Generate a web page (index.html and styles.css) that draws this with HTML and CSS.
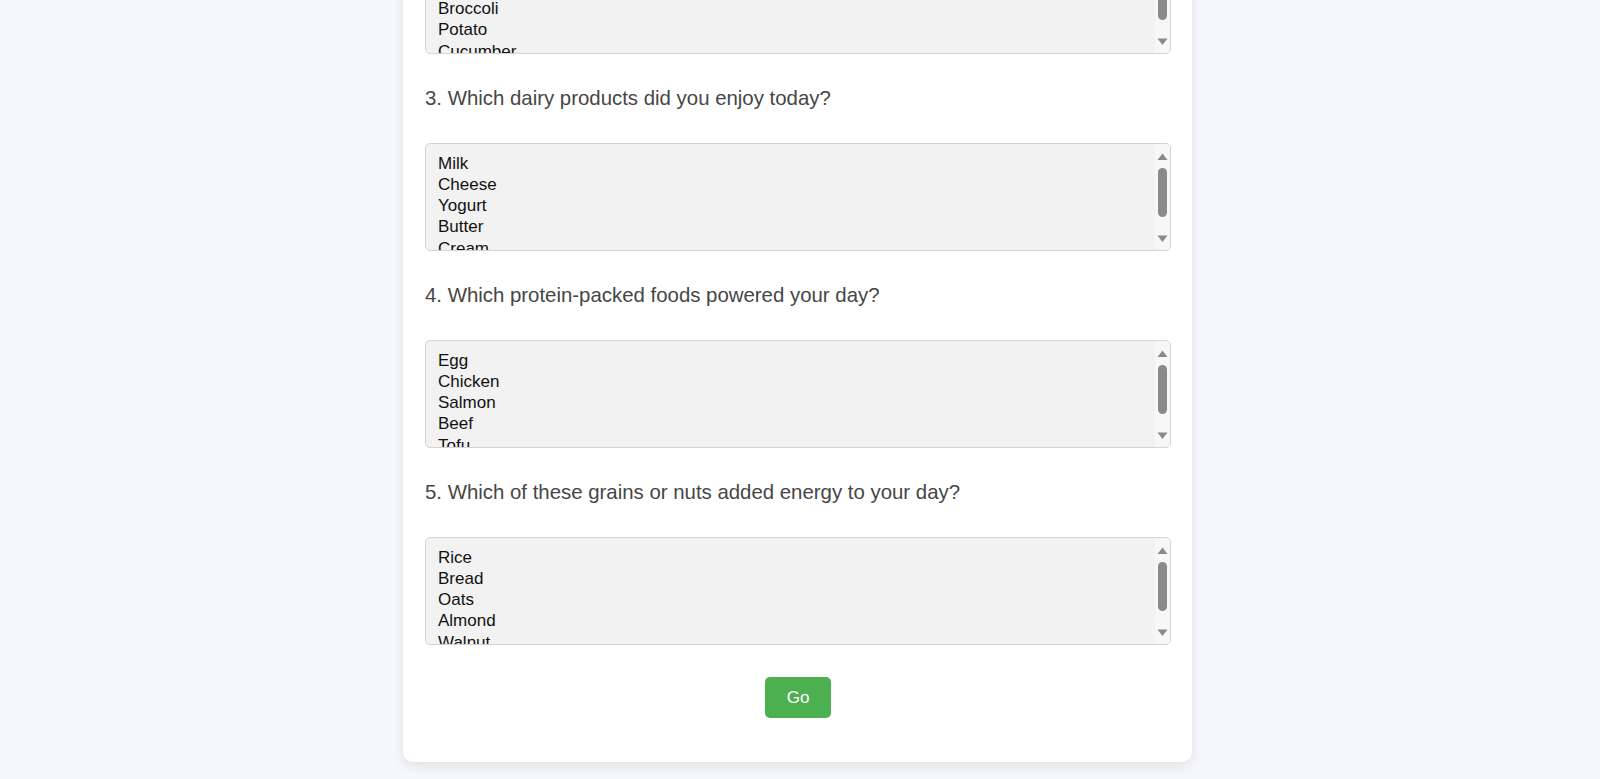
FILE: index.html
```html
<!DOCTYPE html>
<html lang="en">
<head>
<meta charset="utf-8">
<title>Food Survey</title>
<link rel="stylesheet" href="styles.css">
</head>
<body>
<main class="page">
  <form class="card">
    <div class="question">
      <label class="q-label">2. Which vegetables did you eat today?</label>
      <div class="listbox" role="listbox">
        <div class="opts">
          <div class="opt">Carrot</div>
          <div class="opt">Spinach</div>
          <div class="opt">Broccoli</div>
          <div class="opt">Potato</div>
          <div class="opt">Cucumber</div>
          <div class="opt">Tomato</div>
        </div>
        <svg class="sb" width="15" height="106" viewBox="0 0 15 106"><polygon points="2.5,16 7.5,9.5 12.5,16" fill="#8a8a8a"/><rect x="3" y="24" width="9" height="49" rx="4.5" fill="#8a8a8a"/><polygon points="2.5,91.5 12.5,91.5 7.5,98" fill="#8a8a8a"/></svg>
      </div>
    </div>
    <div class="question">
      <label class="q-label">3. Which dairy products did you enjoy today?</label>
      <div class="listbox" role="listbox">
        <div class="opts">
          <div class="opt">Milk</div>
          <div class="opt">Cheese</div>
          <div class="opt">Yogurt</div>
          <div class="opt">Butter</div>
          <div class="opt">Cream</div>
          <div class="opt">Ice Cream</div>
        </div>
        <svg class="sb" width="15" height="106" viewBox="0 0 15 106"><polygon points="2.5,16 7.5,9.5 12.5,16" fill="#8a8a8a"/><rect x="3" y="24" width="9" height="49" rx="4.5" fill="#8a8a8a"/><polygon points="2.5,91.5 12.5,91.5 7.5,98" fill="#8a8a8a"/></svg>
      </div>
    </div>
    <div class="question">
      <label class="q-label">4. Which protein-packed foods powered your day?</label>
      <div class="listbox" role="listbox">
        <div class="opts">
          <div class="opt">Egg</div>
          <div class="opt">Chicken</div>
          <div class="opt">Salmon</div>
          <div class="opt">Beef</div>
          <div class="opt">Tofu</div>
          <div class="opt">Lentils</div>
        </div>
        <svg class="sb" width="15" height="106" viewBox="0 0 15 106"><polygon points="2.5,16 7.5,9.5 12.5,16" fill="#8a8a8a"/><rect x="3" y="24" width="9" height="49" rx="4.5" fill="#8a8a8a"/><polygon points="2.5,91.5 12.5,91.5 7.5,98" fill="#8a8a8a"/></svg>
      </div>
    </div>
    <div class="question">
      <label class="q-label">5. Which of these grains or nuts added energy to your day?</label>
      <div class="listbox" role="listbox">
        <div class="opts">
          <div class="opt">Rice</div>
          <div class="opt">Bread</div>
          <div class="opt">Oats</div>
          <div class="opt">Almond</div>
          <div class="opt">Walnut</div>
          <div class="opt">Quinoa</div>
        </div>
        <svg class="sb" width="15" height="106" viewBox="0 0 15 106"><polygon points="2.5,16 7.5,9.5 12.5,16" fill="#8a8a8a"/><rect x="3" y="24" width="9" height="49" rx="4.5" fill="#8a8a8a"/><polygon points="2.5,91.5 12.5,91.5 7.5,98" fill="#8a8a8a"/></svg>
      </div>
    </div>
    <div class="actions">
      <button type="button" class="go">Go</button>
    </div>
  </form>
</main>
</body>
</html>
```
FILE: styles.css
```css
html, body {
  margin: 0;
  height: 100%;
  overflow: hidden;
}
body {
  background: #f5f7fb;
  font-family: "Liberation Sans", Arial, sans-serif;
}
.page {
  height: 100%;
  box-sizing: border-box;
  display: flex;
  flex-direction: column;
  justify-content: flex-end;
  align-items: center;
  padding: 0 5px 17px 0;
}
.card {
  flex: none;
  width: 789px;
  box-sizing: border-box;
  background: #ffffff;
  border-radius: 10px;
  box-shadow: 0 4px 12px rgba(0, 0, 0, 0.09);
  padding: 22px 21px 44px 22px;
}
.question {
  margin-top: 33px;
}
.q-label {
  display: block;
  font-size: 20.4px;
  line-height: 23px;
  color: #464646;
  margin-bottom: 33px;
}
.listbox {
  display: flex;
  height: 108px;
  box-sizing: border-box;
  border: 1px solid #d4d4d4;
  border-radius: 5px;
  background: #f2f2f2;
  overflow: hidden;
}
.opts {
  flex: 1;
  padding: 8.5px 0 0 10px;
  overflow: hidden;
}
.opt {
  font-size: 17px;
  line-height: 21.3px;
  padding: 0 2px;
  color: #111111;
}
.sb {
  flex: none;
  display: block;
  background: #f7f7f7;
}
.actions {
  display: flex;
  justify-content: center;
  margin-top: 32px;
}
.go {
  width: 66px;
  height: 41px;
  border: none;
  border-radius: 5px;
  background: #4caf50;
  color: #ffffff;
  font-family: "Liberation Sans", Arial, sans-serif;
  font-size: 17px;
  padding: 0;
  cursor: pointer;
}
```
